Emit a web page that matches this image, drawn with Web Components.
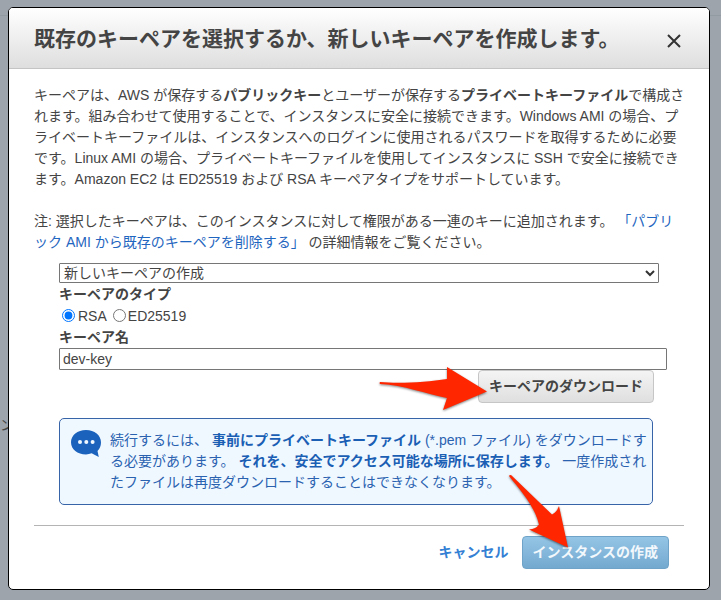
<!DOCTYPE html>
<html lang="ja">
<head>
<meta charset="utf-8">
<meta name="viewport" content="width=device-width, initial-scale=1">
<title>キーペアの選択</title>
<style>
    body {
        margin: 0;
        background: #9da4ac;
        color: #444;
        font: 14px/21px "Liberation Sans", "Noto Sans CJK JP", sans-serif;
    }

    a {
        color: #1f66c0;
        text-decoration: none;
    }

    p {
        margin: 0 0 21px;
    }

    p.lead {
        margin-right: -4px;
    }

    p.note {
        margin-bottom: 10px;
    }
</style>
</head>
<body>
<page-backdrop>
    <modal-dialog heading="既存のキーペアを選択するか、新しいキーペアを作成します。">
        <p class="lead">キーペアは、AWS が保存する<b>パブリックキー</b>とユーザーが保存する<b>プライベートキーファイル</b>で構成されます。組み合わせて使用することで、インスタンスに安全に接続できます。Windows AMI の場合、プライベートキーファイルは、インスタンスへのログインに使用されるパスワードを取得するために必要です。Linux AMI の場合、プライベートキーファイルを使用してインスタンスに SSH で安全に接続できます。Amazon EC2 は ED25519 および RSA キーペアタイプをサポートしています。</p>
        <p class="note">注: 選択したキーペアは、このインスタンスに対して権限がある一連のキーに追加されます。 <a href="#remove">「パブリック AMI から既存のキーペアを削除する」</a> の詳細情報をご覧ください。</p>
        <key-pair-form></key-pair-form>
        <info-note>続行するには、 <b>事前にプライベートキーファイル</b> (*.pem ファイル) をダウンロードする必要があります。 <b>それを、安全でアクセス可能な場所に保存します。</b> 一度作成されたファイルは再度ダウンロードすることはできなくなります。</info-note>
        <aws-button slot="footer" variant="link">キャンセル</aws-button>
        <aws-button slot="footer" variant="primary">インスタンスの作成<pointer-arrow slot="overlay" kind="down"></pointer-arrow></aws-button>
    </modal-dialog>
</page-backdrop>

<script>
class PageBackdrop extends HTMLElement {
    constructor() {
        super()
        this.attachShadow({ mode: 'open' })
        this.shadowRoot.innerHTML = `
            <style>
                :host {
                    display: block;
                    position: relative;
                    overflow: hidden;
                    box-sizing: border-box;
                    min-height: 100vh;
                    padding: 7px 11px 10px 8px;
                }

                /* the page that stays visible behind the dialog */
                .behind {
                    position: absolute;
                    inset: 15px 0 0;
                    border-top: 1px solid #929aa2;
                }

                .behind span {
                    position: absolute;
                    top: 399px;
                    left: 0;
                }
            </style>
            <div class="behind"><span>ン</span></div>
            <slot></slot>
        `
    }
}

class ModalDialog extends HTMLElement {
    constructor() {
        super()
        this.attachShadow({ mode: 'open' })
        this.render()
    }

    render() {
        this.shadowRoot.innerHTML = `
            <style>
                :host {
                    display: block;
                    position: relative;
                    background: #fff;
                    border: 1px solid #000;
                    border-radius: 5px;
                }

                header {
                    display: flex;
                    align-items: center;
                    justify-content: space-between;
                    padding: 15px 25px;
                    background: linear-gradient(#fff, #dedede);
                    border-bottom: 1px solid #c4c4c4;
                    border-radius: 4px 4px 0 0;
                }

                h1 {
                    margin: 0;
                    padding-top: 2px;
                    font-size: 21px;
                    line-height: 28px;
                    white-space: nowrap;
                }

                .close {
                    display: flex;
                    padding: 6px 3px 0;
                    border: 0;
                    background: none;
                    color: #333;
                    cursor: pointer;
                }

                .body {
                    padding: 16px 25px 20px;
                }

                footer {
                    display: flex;
                    justify-content: flex-end;
                    gap: 12px;
                    margin: 0 25px;
                    padding: 10px 15px 20px;
                    border-top: 1px solid #b4b4b4;
                }
            </style>
            <header>
                <h1></h1>
                <button class="close" aria-label="閉じる">
                    <svg width="14" height="14" viewBox="0 0 14 14" fill="none" stroke="currentColor" stroke-width="2"><path d="M1 1L13 13M13 1L1 13"/></svg>
                </button>
            </header>
            <div class="body"><slot></slot></div>
            <footer><slot name="footer"></slot></footer>
        `
        this.shadowRoot.querySelector('h1').textContent = this.getAttribute('heading')
    }
}

class KeyPairForm extends HTMLElement {
    constructor() {
        super()
        this.attachShadow({ mode: 'open' })
        this.render()
    }

    render() {
        this.shadowRoot.innerHTML = `
            <style>
                :host {
                    display: block;
                    padding-left: 25px;
                }

                form {
                    display: flex;
                    flex-direction: column;
                }

                select, input {
                    font: inherit;
                    color: inherit;
                }

                .select {
                    display: grid;
                    align-items: center;
                    margin: 0 25px 1px 0;
                }

                .select > * {
                    grid-area: 1 / 1;
                }

                select {
                    appearance: none;
                    height: 20px;
                    padding: 0 4px;
                    border: 1px solid #767676;
                    border-radius: 1px;
                    background: #fff;
                    line-height: 18px;
                }

                .select svg {
                    justify-self: end;
                    margin-right: 4px;
                    pointer-events: none;
                }

                .label {
                    font-weight: bold;
                }

                .types {
                    display: flex;
                    align-items: center;
                    height: 22px;
                }

                .types input {
                    width: 13px;
                    height: 13px;
                    margin: 0 3px 2px;
                }

                .types label + input {
                    margin-left: 6px;
                    margin-right: 2px;
                }

                .name {
                    height: 22px;
                    box-sizing: border-box;
                    margin: 0 17px 0 0;
                    padding: 0 3px;
                    border: 1px solid #767676;
                    border-radius: 1px;
                }

                aws-button {
                    align-self: flex-end;
                    margin-right: 30px;
                }
            </style>
            <form>
                <div class="select">
                    <select aria-label="キーペアの選択">
                        <option>新しいキーペアの作成</option>
                    </select>
                    <svg width="10" height="8" viewBox="0 0 10 8" fill="none" stroke="#333" stroke-width="2"><path d="M1 2L5 6L9 2"/></svg>
                </div>
                <span class="label" id="type">キーペアのタイプ</span>
                <div class="types" role="radiogroup" aria-labelledby="type">
                    <input type="radio" name="type" id="rsa" checked><label for="rsa">RSA</label>
                    <input type="radio" name="type" id="ed25519"><label for="ed25519">ED25519</label>
                </div>
                <label class="label" for="name">キーペア名</label>
                <input class="name" id="name" type="text" value="dev-key">
                <aws-button>キーペアのダウンロード<pointer-arrow slot="overlay" kind="right"></pointer-arrow></aws-button>
            </form>
        `
    }
}

class InfoNote extends HTMLElement {
    constructor() {
        super()
        this.attachShadow({ mode: 'open' })
        this.shadowRoot.innerHTML = `
            <style>
                :host {
                    display: flex;
                    gap: 9px;
                    margin: 15px 31px 0 25px;
                    padding: 11px 4px 11px 11px;
                    background: #f0f8ff;
                    border: 1px solid #3763a8;
                    border-radius: 5px;
                    color: #2a62b0;
                }

                svg {
                    flex: none;
                }

                ::slotted(b) {
                    color: #1a5fb4;
                }
            </style>
            <svg width="30" height="27" viewBox="0 0 30 27">
                <path fill="#1b62bd" d="M15 0C23.500 0 30 5.200 30 12.500C30 16 28.700 18.800 26.500 20.900L27.800 27L20.600 23.300C18.900 24 17 24.400 15 24.400C6.500 24.400 0 19.500 0 12.300C0 5.200 6.500 0 15 0Z"/>
                <g fill="#f0f8ff"><circle cx="9" cy="12" r="2"/><circle cx="15.300" cy="12" r="2"/><circle cx="21.600" cy="12" r="2"/></g>
            </svg>
            <div><slot></slot></div>
        `
    }
}

class AwsButton extends HTMLElement {
    constructor() {
        super()
        this.attachShadow({ mode: 'open' })
        this.shadowRoot.innerHTML = `
            <style>
                :host {
                    display: block;
                    position: relative;
                }

                button {
                    display: block;
                    padding: 5px 10px;
                    border: 1px solid #c6c6c6;
                    border-radius: 4px;
                    background: linear-gradient(#f4f4f4, #dfdfdf);
                    color: #444;
                    font: bold 14px/21px "Liberation Sans", "Noto Sans CJK JP", sans-serif;
                    cursor: pointer;
                }

                :host([variant="primary"]) button {
                    border-color: #6fa3c8;
                    background: linear-gradient(#94c5e6, #74a9cf);
                    color: #f2f8fc;
                }

                :host([variant="link"]) button {
                    padding: 5px 0;
                    border-color: transparent;
                    background: none;
                    color: #3380d4;
                }
            </style>
            <button type="button"><slot></slot></button>
            <slot name="overlay"></slot>
        `
    }
}

// red hand-drawn style arrow laid over a button
class PointerArrow extends HTMLElement {
    constructor() {
        super()
        this.attachShadow({ mode: 'open' })
        const shapes = {
            right: 'M2 15C22 17 49 15 69 12V0L109 24.500L65 43L69 31C48 27 26 18 2 17Q1 16 2 15Z',
            down: 'M2 0L43 39.500Q48 37 50 31L59 72.500L20 54.500Q27 54 30 49.500C26 32 12 16 0 1Q0 0 2 0Z'
        }
        this.shadowRoot.innerHTML = `
            <style>
                :host {
                    position: absolute;
                    z-index: 2;
                    pointer-events: none;
                }

                :host([kind="right"]) {
                    top: -3px;
                    left: -100px;
                }

                :host([kind="down"]) {
                    top: -61px;
                    left: -13px;
                }

                svg {
                    display: block;
                    overflow: visible;
                    filter: drop-shadow(0 1px 1px rgba(0, 0, 0, .5));
                }
            </style>
            <svg width="109" height="73" aria-hidden="true"><path fill="#ff2600" d="${shapes[this.getAttribute('kind')]}"/></svg>
        `
    }
}

customElements.define('page-backdrop', PageBackdrop)
customElements.define('modal-dialog', ModalDialog)
customElements.define('key-pair-form', KeyPairForm)
customElements.define('info-note', InfoNote)
customElements.define('aws-button', AwsButton)
customElements.define('pointer-arrow', PointerArrow)
</script>
</body>
</html>
